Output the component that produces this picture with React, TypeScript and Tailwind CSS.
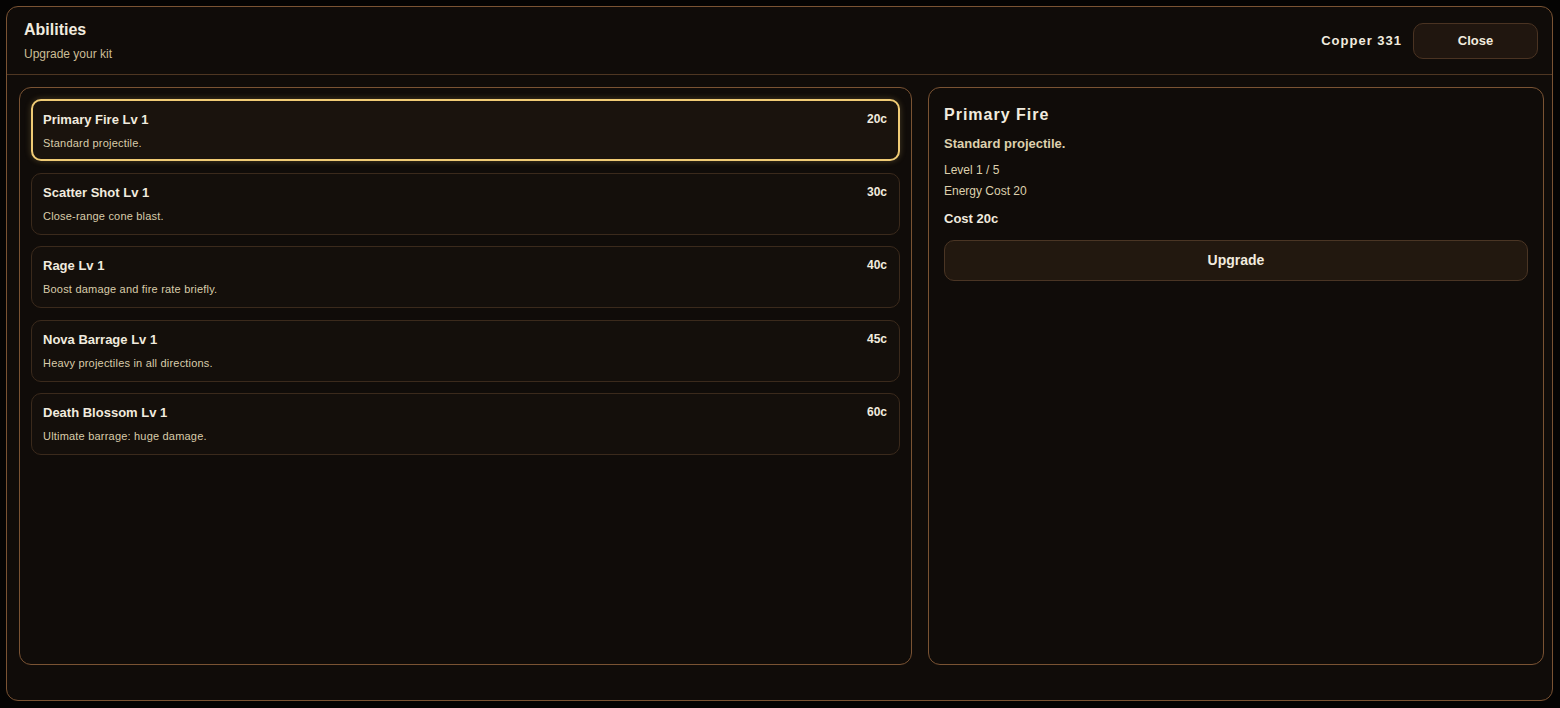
import React from 'react';

interface Ability {
  name: string;
  level: number;
  desc: string;
  cost: number;
}

const abilities: Ability[] = [
  { name: 'Primary Fire', level: 1, desc: 'Standard projectile.', cost: 20 },
  { name: 'Scatter Shot', level: 1, desc: 'Close-range cone blast.', cost: 30 },
  { name: 'Rage', level: 1, desc: 'Boost damage and fire rate briefly.', cost: 40 },
  { name: 'Nova Barrage', level: 1, desc: 'Heavy projectiles in all directions.', cost: 45 },
  { name: 'Death Blossom', level: 1, desc: 'Ultimate barrage: huge damage.', cost: 60 },
];

export default function App() {
  const selected = 0;
  const current = abilities[selected];

  return (
    <div className="w-[1560px] h-[708px] bg-[#050403] pl-[6px] pt-[6px] font-['Liberation_Sans',Arial,sans-serif] text-[#f1ebdf]">
      <div className="w-[1547px] h-[695px] flex flex-col rounded-[12px] border border-[#7a5333] bg-[#100c09]">
        {/* Header */}
        <div className="h-[68px] flex items-center justify-between border-b border-[#4e3622] pl-[17px] pr-[14px]">
          <div className="flex flex-col mt-[5px]">
            <span className="text-[16px] font-bold leading-[20px] mt-[-4px]">Abilities</span>
            <span className="text-[12px] leading-[16px] mt-[6px] text-[#cbbd95]">Upgrade your kit</span>
          </div>
          <div className="flex items-center gap-[11px]">
            <span className="text-[13px] font-bold tracking-[1px]">Copper 331</span>
            <button className="w-[125px] h-[36px] rounded-[10px] border border-[#4a3322] bg-[#20160f] text-[13px] font-bold">
              Close
            </button>
          </div>
        </div>

        {/* Body */}
        <div className="flex gap-[16px] pl-[12px] pr-[8px] pt-[12px] h-[590px]">
          <div className="w-[893px] h-full rounded-[12px] border border-[#7a5333] p-[11px] flex flex-col gap-[11.5px]">
            {abilities.map((a, i) => (
              <div
                key={a.name}
                className={
                  i === selected
                    ? 'h-[62px] shrink-0 rounded-[10px] border-2 border-[#f0cb75] bg-[#1a130d] px-[10px] pt-[10px] shadow-[0_0_6px_rgba(240,200,110,0.25)]'
                    : 'h-[62px] shrink-0 rounded-[10px] border border-[#3b2a1c] bg-[#140f0b] px-[11px] pt-[10px]'
                }
              >
                <div className="flex justify-between items-center">
                  <span className="text-[13px] font-bold leading-[18px]">
                    {a.name} Lv {a.level}
                  </span>
                  <span className="text-[12px] font-bold leading-[18px] mr-[1px] mt-[-2px]">{a.cost}c</span>
                </div>
                <div className="text-[11px] leading-[14px] mt-[7px] text-[#d9ccaa] tracking-[0.2px]">{a.desc}</div>
              </div>
            ))}
          </div>

          <div className="flex-1 h-full rounded-[12px] border border-[#7a5333] px-[15px] pt-[17px]">
            <div className="text-[16px] font-bold tracking-[1px] leading-[20px]">{current.name}</div>
            <div className="text-[13px] font-bold leading-[18px] mt-[10px] text-[#ddd0ad]">{current.desc}</div>
            <div className="text-[12px] leading-[16px] mt-[9px] text-[#ddd0ad]">Level {current.level} / 5</div>
            <div className="text-[12px] leading-[16px] mt-[5px] text-[#ddd0ad]">Energy Cost 20</div>
            <div className="text-[13px] font-bold leading-[18px] mt-[11px]">Cost {current.cost}c</div>
            <button className="w-full h-[41px] mt-[12px] rounded-[10px] border border-[#4a3524] bg-[#22180f] text-[14px] font-bold">
              Upgrade
            </button>
          </div>
        </div>
      </div>
    </div>
  );
}
